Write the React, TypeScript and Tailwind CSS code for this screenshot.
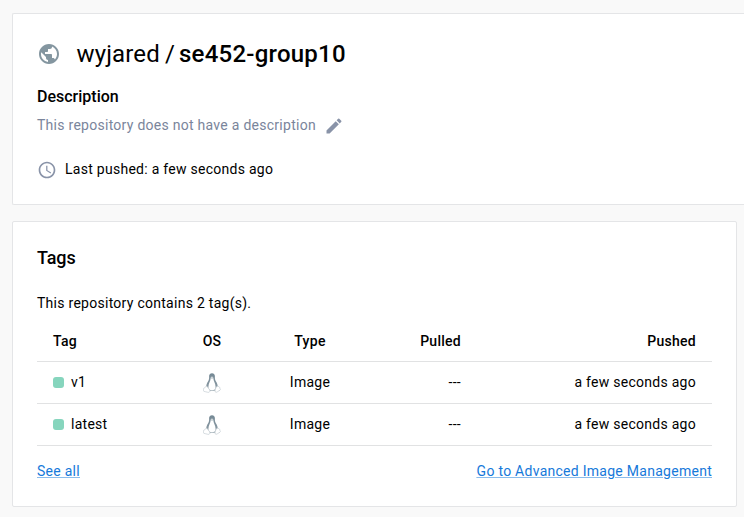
import { MdPublic, MdEdit, MdAccessTime } from "react-icons/md";

const tags = ["v1", "latest"];
const columns = "grid grid-cols-[130px_90px_106px_114px_1fr] items-center";

function Penguin() {
  return (
    <svg viewBox="0 0 18 20" className="mx-auto mt-px block h-5 w-[18px]" fill="none">
      <defs>
        <linearGradient id="coat" x1="0" y1="0" x2="0" y2="1">
          <stop offset="0" stopColor="#758995" />
          <stop offset=".75" stopColor="#8797a1" />
          <stop offset="1" stopColor="#b5c0c6" />
        </linearGradient>
      </defs>
      <path d="M9 .2C7 .2 6 1.500 6.100 3.500c.1 2 0 3.300-1.100 5C3.800 10.300 3.200 12 3.200 14l1.600 4h8.400l1.600-4c0-2-.6-3.700-1.800-5.500-1.100-1.700-1.200-3-1.100-5C12 1.500 11 .2 9 .2Z" fill="url(#coat)" />
      <path d="M7.700 5 9 5.600l1.300-.6c.1 3 2.300 5.400 2.300 9 0 2.200-1.400 3.300-3.600 3.300S5.400 16.200 5.400 14c0-3.600 2.200-6 2.300-9Z" fill="#fff" />
      <path d="M7.300 4.200 9 3.500l1.600.7L9 5.300Z" fill="#d6dcdf" />
      <path d="M3 13.200c.9-.2 1.500.5 2 1.400.6 1 1.800 2 1.900 3.100.1 1.400-1.100 2-2.500 1.500-1.200-.4-2.500-.5-3.500-.9-1-.3-.3-1.200-.4-2-.1-1 .4-1.300 1.200-1.400.6-.2.700-1.500 1.300-1.700ZM14.900 13.200c-.9-.2-1.500.5-1.900 1.400-.5 1-1 2.200-1 3.300 0 1.500 1.400 1.700 2.400.9.800-.7 1.800-1 2.600-1.600.9-.6.3-1.100 0-1.600-.3-.6 0-1.200-.5-1.500-.5-.2-.8-.8-1.600-.9Z" fill="#fff" stroke="#c3ccd1" strokeWidth=".7" />
    </svg>
  );
}

export default function App() {
  return (
    <div className="h-[517px] overflow-hidden bg-[#f9f9f9] pt-[13px] pl-3 font-[Roboto,sans-serif] text-sm tracking-[0.27px] text-black antialiased">
      <section className="h-[192px] rounded-l-xs border border-r-0 border-[#e4e5e7] bg-white pl-6">
        <h1 className="mt-6 flex h-8 items-center text-2xl tracking-[0.15px]">
          <MdPublic className="size-6 text-[#8496a0]" />
          <span className="ml-[15.5px]">wyjared</span>
          <span className="ml-[5px]">/</span>
          <span className="ml-[4px] font-medium tracking-[0.23px]">se452-group10</span>
        </h1>
        <h2 className="mt-[15px] h-6 text-base leading-6 font-medium tracking-normal">Description</h2>
        <div className="mt-1 flex h-6 items-center text-[#7a859b]">
          <span>This repository does not have a description</span>
          <MdEdit className="mt-px ml-2 size-5 text-[#8993a8]" />
        </div>
        <div className="mt-5 flex h-6 items-center">
          <MdAccessTime className="mt-px size-5 text-[#8993a8]" />
          <span className="ml-2">Last pushed: a few seconds ago</span>
        </div>
      </section>
      <section className="mt-4 mr-[7px] h-[286px] rounded-xs border border-[#e4e5e7] bg-white px-6">
        <h2 className="mt-6 h-6 text-lg leading-6 font-medium tracking-[-0.1px]">Tags</h2>
        <p className="mt-[21px] h-6 leading-6">This repository contains 2 tag(s).</p>
        <div className="mt-[5px]">
          <div className={`${columns} h-[42px] border-b border-[#e1e2e3] font-medium`}>
            <span className="pl-4">Tag</span>
            <span className="text-center">OS</span>
            <span className="text-center">Type</span>
            <span className="pr-4 text-right">Pulled</span>
            <span className="pr-4 text-right">Pushed</span>
          </div>
          {tags.map((tag) => (
            <div key={tag} className={`${columns} h-[42px] border-b border-[#e1e2e3] pb-px`}>
              <span className="flex items-center gap-[7.5px] pl-[15.5px]"><i className="size-[11px] rounded-[3px] bg-[#86d5bd]" />{tag}</span>
              <Penguin />
              <span className="text-center">Image</span>
              <span className="pr-4 text-right">---</span>
              <span className="pr-4 text-right">a few seconds ago</span>
            </div>
          ))}
        </div>
        <div className="mt-[13px] flex h-6 items-center justify-between text-[#1679da] underline decoration-[#8abcec] decoration-1 underline-offset-1">
          <a>See all</a>
          <a>Go to Advanced Image Management</a>
        </div>
      </section>
    </div>
  );
}
